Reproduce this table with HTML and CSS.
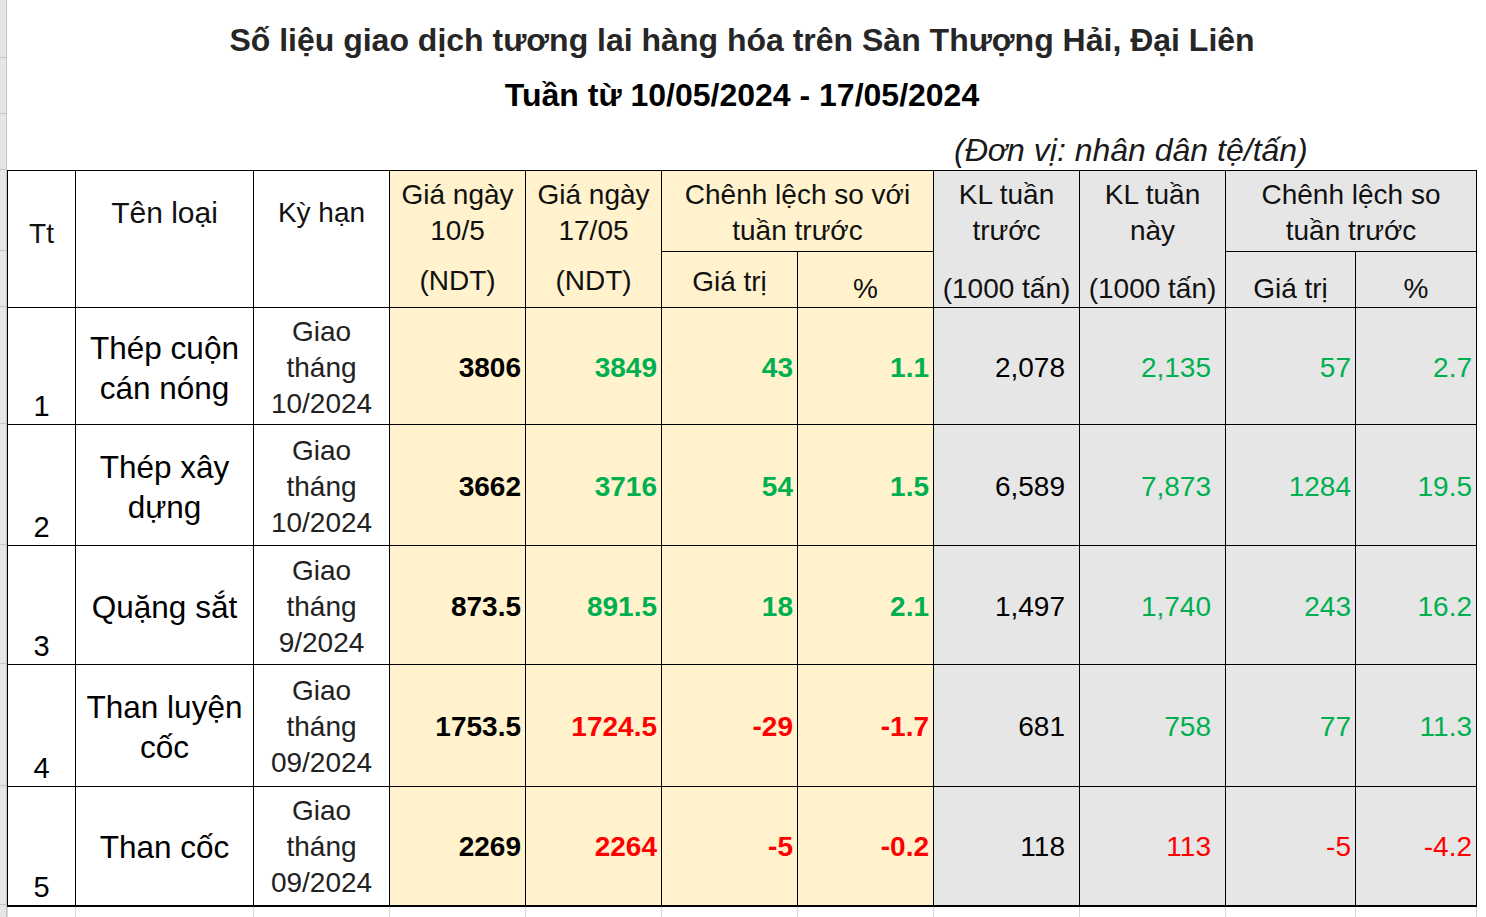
FILE: index.html
```html
<!DOCTYPE html>
<html lang="vi">
<head>
<meta charset="utf-8">
<title>Số liệu giao dịch tương lai hàng hóa</title>
<link rel="stylesheet" href="styles.css">
</head>
<body>
<div class="page">
  <div class="gutter">
    <div class="gr" style="height:57px"></div>
    <div class="gr" style="height:55px"></div>
    <div class="gr" style="height:55px"></div>
    <div class="gr" style="height:80px"></div>
    <div class="gr" style="height:55px"></div>
    <div class="gr" style="height:116px"></div>
    <div class="gr" style="height:120px"></div>
    <div class="gr" style="height:118px"></div>
    <div class="gr" style="height:121px"></div>
    <div class="gr" style="height:118px"></div>
    <div class="gr last"></div>
  </div>
  <div class="sheet">
    <div class="heading">
      <div class="title1">Số liệu giao dịch tương lai hàng hóa trên Sàn Thượng Hải, Đại Liên</div>
      <div class="title2">Tuần từ 10/05/2024 - 17/05/2024</div>
      <div class="unit">(Đơn vị: nhân dân tệ/tấn)</div>
    </div>
    <table class="data">
      <colgroup>
        <col class="w68"><col class="w178"><col class="w136"><col class="w136"><col class="w136"><col class="w136"><col class="w136"><col class="w146"><col class="w146"><col class="w130"><col class="w121">
      </colgroup>
      <tr class="hA">
        <th rowspan="2" class="h-tt">Tt</th>
        <th rowspan="2" class="h-top h-name">Tên loại</th>
        <th rowspan="2" class="h-top">Kỳ hạn</th>
        <th class="y nb h-two">Giá ngày<br>10/5</th>
        <th class="y nb h-two">Giá ngày<br>17/05</th>
        <th colspan="2" class="y h-two">Chênh lệch so với<br>tuần trước</th>
        <th class="g nb h-two">KL tuần<br>trước</th>
        <th class="g nb h-two">KL tuần<br>này</th>
        <th colspan="2" class="g h-two">Chênh lệch so<br>tuần trước</th>
      </tr>
      <tr class="hB">
        <th class="y nt h-low">(NDT)</th>
        <th class="y nt h-low">(NDT)</th>
        <th class="y h-low">Giá trị</th>
        <th class="y bot">%</th>
        <th class="g nt bot">(1000 tấn)</th>
        <th class="g nt bot">(1000 tấn)</th>
        <th class="g bot">Giá trị</th>
        <th class="g bot">%</th>
      </tr>
      <tr class="r1">
        <td class="tt">1</td>
        <td class="name">Thép cuộn<br>cán nóng</td>
        <td class="term">Giao<br>tháng<br>10/2024</td>
        <td class="y num b">3806</td>
        <td class="y num b up">3849</td>
        <td class="y num b up">43</td>
        <td class="y num b up">1.1</td>
        <td class="g num kl">2,078</td>
        <td class="g num kl up">2,135</td>
        <td class="g num up">57</td>
        <td class="g num up">2.7</td>
      </tr>
      <tr class="r2">
        <td class="tt">2</td>
        <td class="name">Thép xây<br>dựng</td>
        <td class="term">Giao<br>tháng<br>10/2024</td>
        <td class="y num b">3662</td>
        <td class="y num b up">3716</td>
        <td class="y num b up">54</td>
        <td class="y num b up">1.5</td>
        <td class="g num kl">6,589</td>
        <td class="g num kl up">7,873</td>
        <td class="g num up">1284</td>
        <td class="g num up">19.5</td>
      </tr>
      <tr class="r3">
        <td class="tt">3</td>
        <td class="name">Quặng sắt</td>
        <td class="term">Giao<br>tháng<br>9/2024</td>
        <td class="y num b">873.5</td>
        <td class="y num b up">891.5</td>
        <td class="y num b up">18</td>
        <td class="y num b up">2.1</td>
        <td class="g num kl">1,497</td>
        <td class="g num kl up">1,740</td>
        <td class="g num up">243</td>
        <td class="g num up">16.2</td>
      </tr>
      <tr class="r4">
        <td class="tt">4</td>
        <td class="name">Than luyện<br>cốc</td>
        <td class="term">Giao<br>tháng<br>09/2024</td>
        <td class="y num b">1753.5</td>
        <td class="y num b dn">1724.5</td>
        <td class="y num b dn">-29</td>
        <td class="y num b dn">-1.7</td>
        <td class="g num kl">681</td>
        <td class="g num kl up">758</td>
        <td class="g num up">77</td>
        <td class="g num up">11.3</td>
      </tr>
      <tr class="r5">
        <td class="tt">5</td>
        <td class="name">Than cốc</td>
        <td class="term">Giao<br>tháng<br>09/2024</td>
        <td class="y num b">2269</td>
        <td class="y num b dn">2264</td>
        <td class="y num b dn">-5</td>
        <td class="y num b dn">-0.2</td>
        <td class="g num kl">118</td>
        <td class="g num kl dn">113</td>
        <td class="g num dn">-5</td>
        <td class="g num dn">-4.2</td>
      </tr>
      <tr class="ghost">
        <td></td><td></td><td></td><td></td><td></td><td></td><td></td><td></td><td></td><td></td><td></td>
      </tr>
    </table>
  </div>
</div>
</body>
</html>
```

FILE: styles.css
```css
html, body {
  margin: 0;
  padding: 0;
  background: #ffffff;
}
body {
  font-family: "Liberation Sans", Arial, sans-serif;
  color: #000;
  overflow: hidden;
}
.page {
  display: flex;
  align-items: flex-start;
  height: 917px;
  overflow: hidden;
}
.gutter {
  width: 6px;
  flex: 0 0 6px;
  height: 917px;
  background: #e6e6e6;
  border-right: 1px solid #c4c4c4;
  display: flex;
  flex-direction: column;
}
.gr {
  border-bottom: 1px solid #c4c4c4;
  flex: 0 0 auto;
}
.gr.last {
  border-bottom: none;
  flex: 1 1 auto;
}
.sheet {
  width: 1470px;
  display: flex;
  flex-direction: column;
}
.heading {
  height: 170px;
  text-align: center;
}
.title1 {
  padding-top: 5px;
  line-height: 70px;
  height: 70px;
  font-size: 32px;
  font-weight: bold;
  color: #262626;
  white-space: nowrap;
}
.title2 {
  line-height: 40px;
  height: 40px;
  font-size: 32px;
  font-weight: bold;
  color: #000;
}
.unit {
  padding-top: 15px;
  line-height: 40px;
  height: 40px;
  font-size: 32px;
  font-style: italic;
  color: #1a1a1a;
  text-align: left;
  padding-left: 947px;
  white-space: nowrap;
}
table.data {
  border-collapse: collapse;
  table-layout: fixed;
  width: 1470px;
  font-size: 28px;
  line-height: 36px;
}
.w68 { width: 68px; }
.w178 { width: 178px; }
.w136 { width: 136px; }
.w146 { width: 146px; }
.w130 { width: 130px; }
.w121 { width: 121px; }
th, td {
  border: 1px solid #000;
  padding: 0 4px;
  text-align: center;
  vertical-align: middle;
  font-weight: normal;
  white-space: nowrap;
  overflow: hidden;
}
th { color: #111; }
.hA { height: 81px; }
.hB { height: 56px; }
.r1 { height: 117px; }
.r2 { height: 121px; }
.r3 { height: 119px; }
.r4 { height: 122px; }
.r5 { height: 119px; }
.r5 td { border-bottom: 2px solid #000; }
.h-tt { padding-bottom: 10px; }
.h-top { vertical-align: top; padding-top: 24px; }
.h-name { font-size: 30px; }
.h-two { padding-top: 4px; }
.h-low { padding-top: 4px; }
.nb { border-bottom: none; }
.nt { border-top: none; }
.bot { vertical-align: bottom; }
.y { background: #fff2cc; }
.g { background: #e7e6e6; }
.tt { vertical-align: bottom; font-size: 29px; }
.name { line-height: 40px; font-size: 31.5px; color: #000; padding-top: 3px; }
.term { color: #222; padding-top: 3px; }
.num { text-align: right; padding-right: 4px; padding-top: 3px; }
.kl { padding-right: 14px; }
td.b { font-weight: bold; }
.up { color: #00b050; }
.dn { color: #ff0000; }
.ghost { height: 30px; }
.ghost td {
  border-top: 2px solid #000;
  border-left: 1px solid #d9d9d9;
  border-right: 1px solid #d9d9d9;
  border-bottom: none;
  background: #fff;
}
```
